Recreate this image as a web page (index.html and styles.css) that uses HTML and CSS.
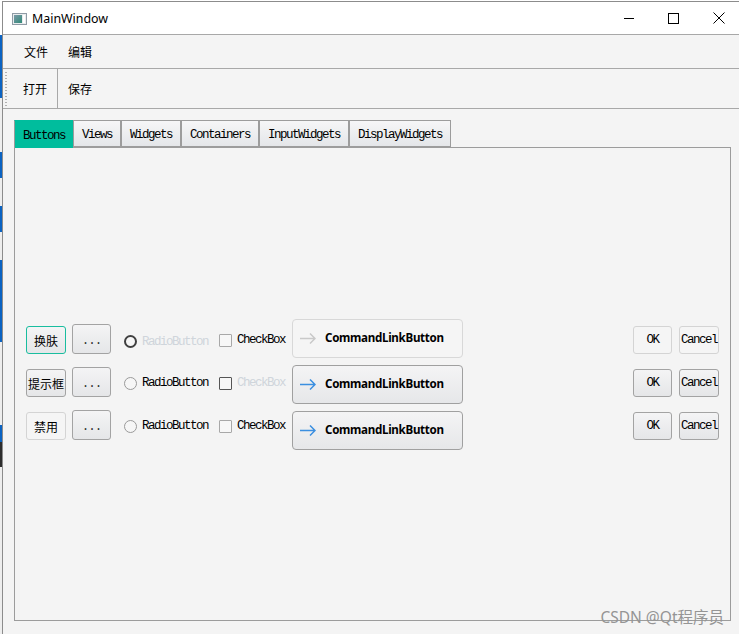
FILE: index.html
```html
<!DOCTYPE html>
<html lang="zh">
<head>
<meta charset="utf-8">
<title>MainWindow</title>
<link rel="stylesheet" href="styles.css">
</head>
<body>
<div class="screen">
  <div class="desk">
    <span class="seg white h35"></span>
    <span class="seg blue h63"></span>
    <span class="seg light h54"></span>
    <span class="seg blue h26"></span>
    <span class="seg light h28"></span>
    <span class="seg blue h26"></span>
    <span class="seg light h28"></span>
    <span class="seg blue h82"></span>
    <span class="seg light h83"></span>
    <span class="seg blue h17"></span>
    <span class="seg dark h25"></span>
    <span class="seg light rest"></span>
  </div>

  <div class="window">
    <div class="titlebar">
      <svg class="app-icon" width="15" height="12" viewBox="0 0 15 12">
        <defs>
          <linearGradient id="ig" x1="0" y1="0" x2="1" y2="1">
            <stop offset="0" stop-color="#7d9aa8"/>
            <stop offset="1" stop-color="#2f8a78"/>
          </linearGradient>
        </defs>
        <rect x="0.5" y="0.5" width="14" height="11" fill="#e9ecee" stroke="#8f9ba5"/>
        <rect x="2" y="2" width="8" height="8" fill="url(#ig)"/>
        <rect x="11" y="2" width="2" height="8" fill="#ffffff"/>
      </svg>
      <span class="title">MainWindow</span>
      <div class="controls">
        <span class="ctl"><svg width="10" height="10" viewBox="0 0 10 10"><path d="M0 5.5H10" stroke="#000" stroke-width="1"/></svg></span>
        <span class="ctl"><svg width="11" height="11" viewBox="0 0 11 11"><rect x="0.5" y="0.5" width="10" height="10" fill="none" stroke="#000" stroke-width="1"/></svg></span>
        <span class="ctl"><svg width="12" height="12" viewBox="0 0 12 12"><path d="M0.5 0.5L11.5 11.5M11.5 0.5L0.5 11.5" stroke="#000" stroke-width="1"/></svg></span>
      </div>
    </div>

    <div class="menubar">
      <span class="menu-item">文件</span>
      <span class="menu-item">编辑</span>
    </div>

    <div class="toolbar">
      <span class="handle"></span>
      <span class="tool">打开</span>
      <span class="tsep"></span>
      <span class="tool">保存</span>
    </div>

    <div class="central">
      <div class="tabbar">
        <span class="tab active">Buttons</span>
        <span class="tab">Views</span>
        <span class="tab">Widgets</span>
        <span class="tab">Containers</span>
        <span class="tab">InputWidgets</span>
        <span class="tab">DisplayWidgets</span>
      </div>
      <div class="pane">
        <div class="left-grid">
          <button class="btn cjk focus">换肤</button>
          <button class="btn dots mono">...</button>
          <span class="radio first"><span class="rind dark"></span><span class="mono disabled">RadioButton</span></span>
          <span class="check"><span class="cind"></span><span class="mono">CheckBox</span></span>

          <button class="btn cjk">提示框</button>
          <button class="btn dots mono">...</button>
          <span class="radio"><span class="rind"></span><span class="mono">RadioButton</span></span>
          <span class="check"><span class="cind dark"></span><span class="mono disabled">CheckBox</span></span>

          <button class="btn cjk flat">禁用</button>
          <button class="btn dots mono">...</button>
          <span class="radio"><span class="rind"></span><span class="mono">RadioButton</span></span>
          <span class="check"><span class="cind"></span><span class="mono">CheckBox</span></span>
        </div>

        <div class="links">
          <button class="cmd flat">
            <svg class="arrow" width="16" height="11" viewBox="0 0 16 11"><path d="M0 5.5H15M10 0.5L15 5.5L10 10.5" fill="none" stroke="currentColor" stroke-width="1.5"/></svg>
            <span class="cmd-text">CommandLinkButton</span>
          </button>
          <button class="cmd">
            <svg class="arrow" width="16" height="11" viewBox="0 0 16 11"><path d="M0 5.5H15M10 0.5L15 5.5L10 10.5" fill="none" stroke="currentColor" stroke-width="1.5"/></svg>
            <span class="cmd-text">CommandLinkButton</span>
          </button>
          <button class="cmd">
            <svg class="arrow" width="16" height="11" viewBox="0 0 16 11"><path d="M0 5.5H15M10 0.5L15 5.5L10 10.5" fill="none" stroke="currentColor" stroke-width="1.5"/></svg>
            <span class="cmd-text">CommandLinkButton</span>
          </button>
        </div>

        <div class="spacer"></div>

        <div class="right-grid">
          <button class="btn mono ok flat">OK</button>
          <button class="btn mono cancel flat">Cancel</button>
          <button class="btn mono ok">OK</button>
          <button class="btn mono cancel">Cancel</button>
          <button class="btn mono ok">OK</button>
          <button class="btn mono cancel">Cancel</button>
        </div>
      </div>
    </div>

    <div class="watermark">CSDN @Qt程序员</div>
  </div>
</div>
</body>
</html>
```

FILE: styles.css
```css
html, body {
  margin: 0;
  padding: 0;
}
body {
  width: 739px;
  height: 634px;
  overflow: hidden;
  background: #ffffff;
  font-family: "Noto Sans", "Noto Sans CJK SC", sans-serif;
  color: #000;
}
.screen {
  display: flex;
  width: 739px;
  height: 634px;
  overflow: hidden;
}

/* desktop strip on the far left */
.desk {
  width: 2px;
  flex: none;
  display: flex;
  flex-direction: column;
}
.seg { display: block; width: 2px; flex: none; }
.seg.white { background: #ffffff; }
.seg.light { background: #eeeeee; }
.seg.blue { background: #0b63c2; }
.seg.dark { background: #2e2e2e; }
.h35 { height: 35px; }
.h63 { height: 63px; }
.h54 { height: 54px; }
.h26 { height: 26px; }
.h28 { height: 28px; }
.h82 { height: 82px; }
.h83 { height: 83px; }
.h17 { height: 17px; }
.h25 { height: 25px; }
.seg.rest { flex: 1; }

/* window */
.window {
  position: relative;
  flex: 1;
  min-width: 0;
  margin-top: 1px;
  border-top: 1px solid #8c8c8c;
  border-left: 1px solid #8c8c8c;
  background: #f4f4f4;
  display: flex;
  flex-direction: column;
}
.titlebar {
  height: 32px;
  flex: none;
  background: #ffffff;
  border-bottom: 1px solid #a8a8a8;
  display: flex;
  align-items: center;
}
.app-icon {
  margin-left: 9px;
  margin-top: 1px;
  flex: none;
}
.title {
  margin-left: 5px;
  font-family: "Noto Sans", sans-serif;
  font-size: 12.4px;
  color: #000;
}
.controls {
  margin-left: auto;
  margin-right: -2px;
  display: flex;
  height: 32px;
}
.ctl {
  width: 45px;
  height: 32px;
  display: flex;
  align-items: center;
  justify-content: center;
}

.menubar {
  height: 33px;
  flex: none;
  border-bottom: 1px solid #a8a8a8;
  display: flex;
  align-items: center;
  padding-left: 11px;
}
.menu-item {
  padding: 0 10px;
  font-family: "Noto Sans CJK SC", sans-serif;
  font-size: 12px;
  line-height: 16px;
}

.toolbar {
  height: 39px;
  flex: none;
  border-bottom: 1px solid #a8a8a8;
  display: flex;
  align-items: stretch;
}
.handle {
  width: 2px;
  margin: 3px 6px 2px 2px;
  background-image: repeating-linear-gradient(to bottom, #b0b0b0 0, #b0b0b0 1px, transparent 1px, transparent 3px);
}
.tool {
  display: flex;
  align-items: center;
  padding: 0 10px;
  font-family: "Noto Sans CJK SC", sans-serif;
  font-size: 12px;
}
.tsep {
  width: 1px;
  background: #a8a8a8;
}

/* central area */
.central {
  flex: 1;
  display: flex;
  flex-direction: column;
  padding: 11px 8px 13px 11px;
  min-height: 0;
}
.mono {
  font-family: "Liberation Mono", monospace;
  font-size: 12.5px;
  letter-spacing: -1.5px;
}
.tabbar {
  display: flex;
  height: 27px;
  flex: none;
  align-items: flex-start;
}
.tab {
  box-sizing: border-box;
  height: 27px;
  padding: 2px 8px 0 8px;
  border: 1px solid #9c9c9c;
  background: linear-gradient(#f6f6f7, #e4e6e9);
  display: flex;
  align-items: center;
  font-family: "Liberation Mono", monospace;
  font-size: 12.5px;
  letter-spacing: -1.5px;
  white-space: nowrap;
}
.tab.active {
  height: 28px;
  padding: 3px 7px 0 8px;
  background: #00bd9d;
  border-color: #00bd9d;
  border-left-color: #9c9c9c;
  border-bottom: none;
  position: relative;
  z-index: 1;
}
.pane {
  flex: 1;
  border: 1px solid #9c9c9c;
  background: #f4f4f4;
  display: flex;
  align-items: center;
  padding: 0 11px;
}

/* buttons */
.btn {
  box-sizing: border-box;
  height: 28px;
  padding: 0;
  margin: 0;
  border: 1px solid #a3a3a3;
  border-radius: 3px;
  background: linear-gradient(#f4f4f5, #e5e6e8);
  color: #000;
  display: flex;
  align-items: center;
  justify-content: center;
}
.btn.cjk {
  width: 40px;
  font-family: "Noto Sans CJK SC", sans-serif;
  font-size: 12px;
}
.btn.focus {
  border-color: #19bd9f;
}
.btn.flat {
  border-color: #d4d4d4;
  background: #f5f5f5;
}
.btn.dots {
  width: 39px;
  height: 30px;
  padding-top: 3px;
  letter-spacing: -1px;
  color: #333;
  font-weight: normal;
}

.left-grid {
  display: grid;
  grid-template-columns: 46px 52px 95px 66px;
  grid-auto-rows: 30px;
  row-gap: 13px;
  align-items: end;
  justify-items: start;
  margin-bottom: 4px;
  flex: none;
}
.radio, .check {
  display: flex;
  align-items: center;
  align-self: center;
  white-space: nowrap;
  margin-top: 2px;
}
.radio.first {
  margin-top: 5px;
}
.rind {
  box-sizing: border-box;
  width: 13px;
  height: 13px;
  border: 1px solid #9a9a9a;
  border-radius: 50%;
  background: #f6f6f6;
  margin-right: 5px;
  flex: none;
}
.rind.dark {
  border: 2px solid #404040;
}
.cind {
  box-sizing: border-box;
  width: 13px;
  height: 13px;
  border: 1px solid #a8a8a8;
  border-radius: 1px;
  background: #f7f7f7;
  margin-right: 5px;
  flex: none;
}
.cind.dark {
  border-color: #555555;
}
.disabled {
  color: #cfd5db;
}

/* command link buttons */
.links {
  margin-left: 7px;
  display: flex;
  flex-direction: column;
  gap: 7px;
  flex: none;
}
.cmd {
  box-sizing: border-box;
  width: 171px;
  height: 39px;
  margin: 0;
  padding: 0 0 0 7px;
  border: 1px solid #a0a0a0;
  border-radius: 4px;
  background: linear-gradient(#f4f4f5, #e6e7e9);
  display: flex;
  align-items: center;
  color: #3b8fe0;
}
.cmd.flat {
  border-color: #d8d8d8;
  background: #f5f5f5;
  color: #c9c9c9;
}
.arrow {
  flex: none;
  margin-top: 1px;
}
.cmd-text {
  margin-left: 9px;
  font-family: "Noto Sans", sans-serif;
  font-weight: bold;
  font-size: 11.6px;
  letter-spacing: -0.3px;
  color: #000;
  white-space: nowrap;
  margin-top: -1px;
}

.spacer {
  flex: 1;
}

.right-grid {
  display: grid;
  grid-template-columns: 46px 40px;
  grid-auto-rows: 30px;
  row-gap: 13px;
  align-items: end;
  justify-items: start;
  margin-bottom: 4px;
  flex: none;
}
.btn.ok { width: 39px; }
.btn.cancel { width: 40px; }

.watermark {
  position: absolute;
  right: 15px;
  bottom: 8px;
  font-family: "Noto Sans", "Noto Sans CJK SC", sans-serif;
  font-size: 15.5px;
  line-height: 18px;
  color: #959595;
  white-space: nowrap;
}
```
